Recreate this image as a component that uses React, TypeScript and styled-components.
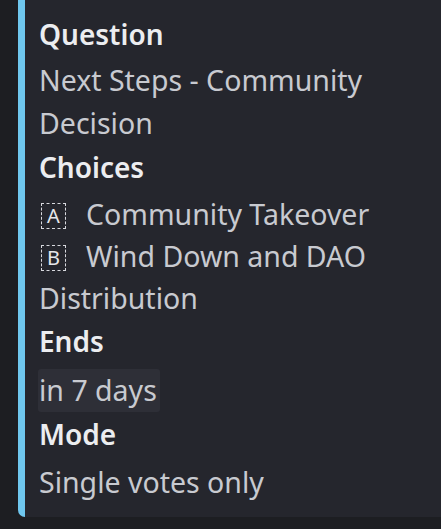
import React from "react";
import styled, { createGlobalStyle } from "styled-components";

const Global = createGlobalStyle`
  html, body { margin: 0; padding: 0; background: #1d1e22; }
  body { font-family: "Noto Sans", "Open Sans", sans-serif; }
`;

const Page = styled.div`
  width: 441px;
  height: 529px;
  background: #1d1e22;
  padding: 0 0 12px 18px;
  box-sizing: border-box;
  display: flex;
`;

const Card = styled.div`
  flex: 1;
  background: #25262d;
  border-left: 7px solid #6fc7ee;
  border-bottom-left-radius: 7px;
  padding: 12px 8px 0 14px;
  display: flex;
  flex-direction: column;
`;

const Label = styled.div`
  font-weight: 600;
  font-size: 28px;
  line-height: 44px;
  color: #ecedf0;
`;

const Value = styled.div<{ $mt?: number }>`
  font-size: 28.5px;
  line-height: 43px;
  color: #c8cad0;
  margin-top: ${(p) => p.$mt ?? 4}px;
`;

const Choices = styled.div`
  margin-top: 4px;
`;

const Choice = styled.div`
  font-size: 28.5px;
  line-height: 42px;
  color: #c8cad0;
`;

const Key = styled.span`
  display: inline-flex;
  align-items: center;
  justify-content: center;
  width: 25px;
  height: 26px;
  border: 1.5px dashed #d8d9de;
  box-sizing: border-box;
  font-size: 20px;
  line-height: 1;
  color: #e6e7ea;
  margin: 0 20px 0 2px;
  vertical-align: 2px;
`;

const Pill = styled.span`
  display: inline-block;
  background: #2e2f37;
  border-radius: 3px;
  padding: 0 3px 0 1px;
  margin-left: -1px;
`;

export default function App() {
  return (
    <>
      <Global />
      <Page>
        <Card>
          <Label>Question</Label>
          <Value $mt={3}>Next Steps - Community Decision</Value>
          <Label>Choices</Label>
          <Choices>
            <Choice>
              <Key>A</Key>Community Takeover
            </Choice>
            <Choice>
              <Key>B</Key>Wind Down and DAO Distribution
            </Choice>
          </Choices>
          <Label>Ends</Label>
          <Value $mt={6}>
            <Pill>in 7 days</Pill>
          </Value>
          <Label>Mode</Label>
          <Value $mt={5}>Single votes only</Value>
        </Card>
      </Page>
    </>
  );
}
